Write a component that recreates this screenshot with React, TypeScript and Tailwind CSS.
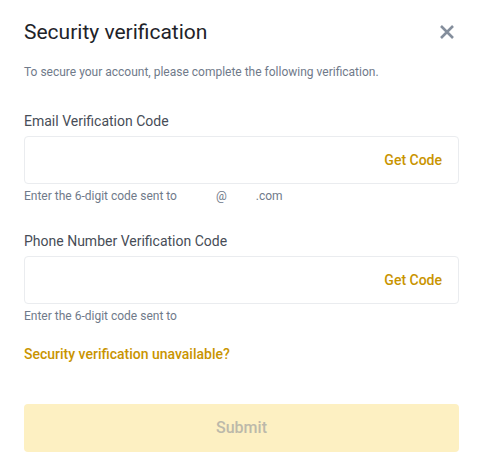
import React from 'react';

const font = { fontFamily: 'Roboto, "Noto Sans", sans-serif' };

function CodeField({ label, hint }: { label: string; hint: React.ReactNode }) {
  return (
    <div className="flex flex-col">
      <label className="text-[14px] leading-[20px] text-[#474D57]">{label}</label>
      <div className="mt-[5px] h-[48px] rounded-[4px] border border-[#EAECEF] flex items-center justify-end px-[16px]">
        <button className="text-[14px] font-medium text-[#C99400]">Get Code</button>
      </div>
      <div className="mt-[4px] text-[12px] leading-[16px] text-[#707A8A]">{hint}</div>
    </div>
  );
}

export default function App() {
  return (
    <div className="w-[483px] h-[474px] bg-white px-[24px] pt-[20px]" style={font}>
      <div className="flex items-center justify-between h-[24px]">
        <h2 className="text-[21px] leading-[24px] text-[#1E2329]">Security verification</h2>
        <svg width="16" height="16" viewBox="0 0 16 16" className="mr-[4px]">
          <path d="M2 2L14 14M14 2L2 14" stroke="#848E9C" strokeWidth="2.6" />
        </svg>
      </div>
      <p className="mt-[20px] text-[12px] leading-[16px] text-[#707A8A]">
        To secure your account, please complete the following verification.
      </p>
      <div className="mt-[31px]">
        <CodeField
          label="Email Verification Code"
          hint={
            <span>
              Enter the 6-digit code sent to<span className="ml-[39px]">@</span>
              <span className="ml-[29px]">.com</span>
            </span>
          }
        />
      </div>
      <div className="mt-[27px]">
        <CodeField label="Phone Number Verification Code" hint="Enter the 6-digit code sent to" />
      </div>
      <div className="mt-[20px] text-[14px] font-medium leading-[20px] text-[#C99400]">
        Security verification unavailable?
      </div>
      <button className="mt-[40px] w-full h-[48px] rounded-[4px] bg-[#FDF0C2] text-[16px] font-medium text-[#BCB9AA]">
        Submit
      </button>
    </div>
  );
}
